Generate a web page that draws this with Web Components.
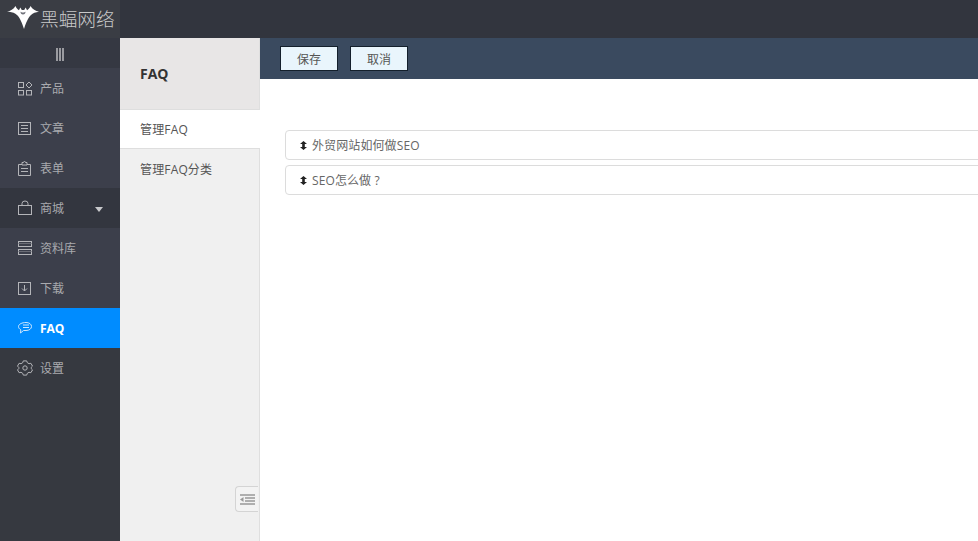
<!DOCTYPE html>
<html lang="zh">
<head>
<meta charset="utf-8">
<title>FAQ</title>
<style>
html, body { margin: 0; height: 100%; overflow: hidden; }
body { font-family: "Open Sans", "Noto Sans CJK SC", sans-serif; font-size: 12px; color: #333; }
</style>
</head>
<body>
<app-shell>
  <top-bar slot="top"></top-bar>
  <side-menu slot="menu">
    <menu-item icon="product" label="产品"></menu-item>
    <menu-item icon="article" label="文章"></menu-item>
    <menu-item icon="form" label="表单"></menu-item>
    <menu-item icon="shop" label="商城" open></menu-item>
    <menu-item icon="library" label="资料库"></menu-item>
    <menu-item icon="download" label="下载"></menu-item>
    <menu-item icon="faq" label="FAQ" active></menu-item>
    <menu-item icon="settings" label="设置" plain></menu-item>
  </side-menu>
  <sub-nav slot="sub" heading="FAQ">
    <sub-link active>管理FAQ</sub-link>
    <sub-link>管理FAQ分类</sub-link>
  </sub-nav>
  <tool-bar slot="tools">
    <tool-button>保存</tool-button>
    <tool-button>取消</tool-button>
  </tool-bar>
  <faq-list slot="main">
    <faq-row>外贸网站如何做SEO</faq-row>
    <faq-row>SEO怎么做 ?</faq-row>
  </faq-list>
</app-shell>

<script>
const ICONS = {
  product: '<rect x="1.5" y="2.5" width="5" height="5"/><path d="M12 2l3 3-3 3-3-3z"/><rect x="1.5" y="10.5" width="5" height="4.500"/><rect x="9.500" y="10.500" width="5" height="4.500"/>',
  article: '<rect x="1.5" y="2.5" width="12" height="12"/><path d="M4 5.500h7M4 8.500h7M4 11.500h7"/>',
  form: '<path d="M5 4.500H1.500v11h12v-11H10"/><path d="M5 5V2.500h1.500a1 1 0 0 1 2 0H10V5z"/><path d="M4 8.500h7M4 11.500h7"/>',
  shop: '<rect x="1.500" y="5.500" width="13" height="9"/><path d="M5 5.500V3.500a3 2.500 0 0 1 6 0v2"/>',
  library: '<rect x="1.500" y="1.500" width="13" height="5"/><rect x="1.500" y="9.500" width="13" height="5"/><path d="M1.500 3.500h13M1.500 11.500h13" stroke="#6a6c75"/>',
  download: '<rect x="1.500" y="2.500" width="12" height="12"/><path d="M7.500 5v6M5 8.500l2.500 2.500L10 8.500"/>',
  faq: '<path d="M9 2.500c3.300 0 5.500 1.700 5.500 4s-2.200 4-5.500 4H6.500L3.500 13l.3-3.200C2.500 9 1.500 7.900 1.500 6.500c0-2.300 3.500-4 7.500-4z"/><path d="M6 5h6M6 7.500h6"/>',
  settings: '<path d="M6.300 1.500h3.400l.6 1.800 1.700 1 1.900-.4 1.600 2.800-1.300 1.300v1.200l1.300 1.300-1.600 2.800-1.900-.4-1.700 1-.6 1.800H6.300l-.6-1.800-1.700-1-1.900.4L.5 10.500l1.300-1.300V8L.5 6.700l1.600-2.800 1.900.4 1.700-1z" transform="translate(0 -.6)"/><circle cx="8" cy="8" r="2.200"/>'
};

class AppShell extends HTMLElement {
  constructor() {
    super();
    this.attachShadow({ mode: "open" });
    this.shadowRoot.innerHTML = `
      <style>
        :host { display: grid; height: 541px; width: 978px; overflow: hidden;
          grid-template: 38px 41px 1fr / 120px 140px 1fr; }
        ::slotted([slot=top]) { grid-column: 1 / 4; }
        ::slotted([slot=menu]) { grid-row: 2 / 4; }
        ::slotted([slot=sub]) { grid-row: 2 / 4; }
      </style>
      <slot name="top"></slot>
      <slot name="menu"></slot>
      <slot name="sub"></slot>
      <slot name="tools"></slot>
      <slot name="main"></slot>`;
  }
}

class TopBar extends HTMLElement {
  constructor() {
    super();
    this.attachShadow({ mode: "open" });
    this.shadowRoot.innerHTML = `
      <style>
        :host { display: flex; background: #32353e; }
        .logo { width: 120px; box-sizing: border-box; background: #3a3d44; display: flex; align-items: center;
          padding-left: 7px; color: #c9c9c9; font-size: 18.700px; font-weight: 300; line-height: 38px; white-space: nowrap; }
        svg { flex: none; margin-top: -2px; }
      </style>
      <div class="logo">
        <svg width="33" height="26" viewBox="0 0 33 26">
          <path fill="#fff" d="M0 6.700C3.500 6 6.500 4.300 8.500 1c.8 2 2 3.400 3.500 4.300L13.300 2.500 14.800 5c.8-.1 1.600-.1 2.400 0l1.500-2.500L20 5.300c1.500-.9 2.700-2.300 3.500-4.300 2 3.300 5 5 8.500 5.700-3.500.4-6 1.400-8 3.300-2.800 2.700-4.800 7-7 14-2.200-7-4.200-11.300-7-14-2-1.900-4.500-2.900-8-3.300z"/>
          <path fill="#70727a" d="M13.500 6.500c1 1.300 4 1.300 5 0 .2 1.800-1 3-2.500 3s-2.700-1.200-2.500-3z"/>
        </svg>
        <span>黑蝠网络</span>
      </div>`;
  }
}

class SideMenu extends HTMLElement {
  constructor() {
    super();
    this.attachShadow({ mode: "open" });
    this.shadowRoot.innerHTML = `
      <style>
        :host { display: flex; flex-direction: column; background: #3c3f4b; }
        .fold { height: 30px; background: #353842; display: flex; align-items: center; justify-content: center; gap: 1px; }
        .fold i { width: 2px; height: 13px; margin-top: 2px; background: #9a9ba0; }
        .rest { flex: 1; background: #363940; }
      </style>
      <div class="fold"><i></i><i></i><i></i></div>
      <slot></slot>
      <div class="rest"></div>`;
  }
}

class MenuItem extends HTMLElement {
  constructor() {
    super();
    this.attachShadow({ mode: "open" });
    const icon = ICONS[this.getAttribute("icon")] || "";
    const label = this.getAttribute("label") || "";
    this.shadowRoot.innerHTML = `
      <style>
        :host { display: flex; align-items: center; height: 40px; padding-left: 17px; gap: 7px;
          background: #3c3f4b; color: #a9aaae; position: relative; }
        :host([open]) { background: #33363f; }
        :host([plain]) { background: #363940; }
        :host([active]) { background: #008cff; color: #fff; font-weight: 700; }
        svg { width: 16px; height: 16px; fill: none; stroke: #b4b5b9; stroke-width: 1; flex: none; }
        :host([active]) svg { stroke: #cfe8ff; }
        .arrow { position: absolute; left: 95px; top: 19px; border: 4.500px solid transparent;
          border-top: 5px solid #c8c9cc; border-bottom: 0; display: none; }
        :host([open]) .arrow { display: block; }
      </style>
      <svg viewBox="0 0 16 16">${icon}</svg>
      <span>${label}</span>
      <span class="arrow"></span>`;
  }
}

class SubNav extends HTMLElement {
  constructor() {
    super();
    this.attachShadow({ mode: "open" });
    this.shadowRoot.innerHTML = `
      <style>
        :host { display: flex; flex-direction: column; background: #f0f0f0; border-right: 1px solid #dfdfdf;
          box-sizing: border-box; position: relative; }
        h2 { margin: 0; height: 72px; box-sizing: border-box; background: #e8e6e6; border-bottom: 1px solid #dedede;
          padding-left: 20px; font-size: 14px; line-height: 71px; color: #333; font-weight: 700; }
        .collapse { position: absolute; left: 115px; top: 448px; width: 23px; height: 26px; box-sizing: border-box;
          border: 1px solid #d4d4d4; border-right: 0; border-radius: 4px 0 0 4px; background: #f3f3f3;
          display: flex; align-items: center; justify-content: center; }
      </style>
      <h2>${this.getAttribute("heading") || ""}</h2>
      <slot></slot>
      <div class="collapse">
        <svg width="15" height="11" viewBox="0 0 15 11">
          <path stroke="#999" stroke-width="1.500" d="M0 1h15M5 4h10M5 7h10M0 10h15"/>
          <path fill="#999" d="M3.500 3v5L0 5.500z"/>
        </svg>
      </div>`;
  }
}

class SubLink extends HTMLElement {
  constructor() {
    super();
    this.attachShadow({ mode: "open" });
    this.shadowRoot.innerHTML = `
      <style>
        :host { display: flex; align-items: center; height: 40px; box-sizing: border-box; padding-left: 20px;
          color: #555; letter-spacing: .15px; }
        :host([active]) { height: 39px; background: #fff; border-bottom: 1px solid #dedede; margin-right: -1px; }
      </style>
      <slot></slot>`;
  }
}

class ToolBar extends HTMLElement {
  constructor() {
    super();
    this.attachShadow({ mode: "open" });
    this.shadowRoot.innerHTML = `
      <style>
        :host { display: flex; align-items: flex-start; gap: 12px; padding: 8px 20px 0; background: #3a4a5f; }
      </style>
      <slot></slot>`;
  }
}

class ToolButton extends HTMLElement {
  constructor() {
    super();
    this.attachShadow({ mode: "open" });
    this.shadowRoot.innerHTML = `
      <style>
        :host { display: flex; align-items: center; justify-content: center; width: 58px; height: 25px;
          box-sizing: border-box; background: #e9f5fc; border: 1px solid #14202c; color: #555; }
      </style>
      <slot></slot>`;
  }
}

class FaqList extends HTMLElement {
  constructor() {
    super();
    this.attachShadow({ mode: "open" });
    this.shadowRoot.innerHTML = `
      <style>
        :host { display: flex; flex-direction: column; gap: 5px; padding: 51px 0 0 25px; background: #fff; overflow: hidden; }
      </style>
      <slot></slot>`;
  }
}

class FaqRow extends HTMLElement {
  constructor() {
    super();
    this.attachShadow({ mode: "open" });
    this.shadowRoot.innerHTML = `
      <style>
        :host { display: flex; align-items: center; gap: 5px; width: 800px; height: 30px; box-sizing: border-box;
          border: 1px solid #dcdcdc; border-radius: 4px; padding-left: 14px; color: #666; background: #fff; letter-spacing: .1px; }
        svg { flex: none; }
      </style>
      <svg width="7" height="9" viewBox="0 0 7 9"><path fill="#222" d="M3.500 0L7 3H4.800v3H7L3.500 9 0 6h2.200V3H0z"/></svg>
      <span><slot></slot></span>`;
  }
}

customElements.define("app-shell", AppShell);
customElements.define("top-bar", TopBar);
customElements.define("side-menu", SideMenu);
customElements.define("menu-item", MenuItem);
customElements.define("sub-nav", SubNav);
customElements.define("sub-link", SubLink);
customElements.define("tool-bar", ToolBar);
customElements.define("tool-button", ToolButton);
customElements.define("faq-list", FaqList);
customElements.define("faq-row", FaqRow);
</script>
</body>
</html>
